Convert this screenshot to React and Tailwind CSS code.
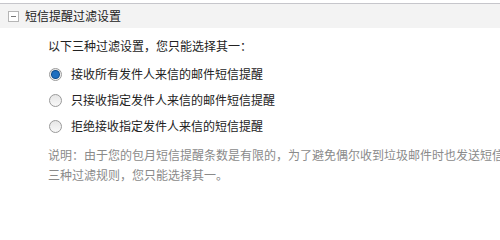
import React, { useState } from 'react'

const OPTIONS = [
  '接收所有发件人来信的邮件短信提醒',
  '只接收指定发件人来信的邮件短信提醒',
  '拒绝接收指定发件人来信的短信提醒',
]

function Radio({ checked }) {
  return (
    <span className="w-[13px] h-[13px] rounded-full border border-[#9a9a9a] bg-gradient-to-b from-[#e6e6e6] to-[#f8f8f8] flex items-center justify-center shrink-0">
      {checked && <span className="w-[7px] h-[7px] rounded-full bg-[#1f6fc0] ring-1 ring-[#0b4a8a]" />}
    </span>
  )
}

export default function App() {
  const [selected, setSelected] = useState(0)

  return (
    <div className="w-[500px] h-[200px] overflow-hidden bg-white text-[12px] text-[#222] font-['SimSun','Noto_Sans_CJK_SC',sans-serif] pt-[3px]">
      <div className="flex items-center gap-[6px] h-[25px] pl-[8px] border-t border-[#c6c6cb] bg-[#f3f3f3]">
        <span className="w-[11px] h-[11px] border border-[#b5b5b5] bg-white flex items-center justify-center">
          <span className="w-[5px] h-px bg-[#777]" />
        </span>
        <span className="leading-none">短信提醒过滤设置</span>
      </div>

      <div className="pl-[48px] pt-[10px]">
        <p className="leading-[16px]">以下三种过滤设置，您只能选择其一：</p>
        <div className="mt-[12px] flex flex-col gap-[10px]">
          {OPTIONS.map((label, i) => (
            <label key={i} className="flex items-center gap-[9px] h-[16px] pl-[1px] cursor-pointer" onClick={() => setSelected(i)}>
              <Radio checked={selected === i} />
              <span className="leading-none">{label}</span>
            </label>
          ))}
        </div>
        <p className="mt-[11px] text-[#8a8a8a] leading-[20px] whitespace-nowrap">
          说明：由于您的包月短信提醒条数是有限的，为了避免偶尔收到垃圾邮件时也发送短信
          <br />
          三种过滤规则，您只能选择其一。
        </p>
      </div>
    </div>
  )
}
